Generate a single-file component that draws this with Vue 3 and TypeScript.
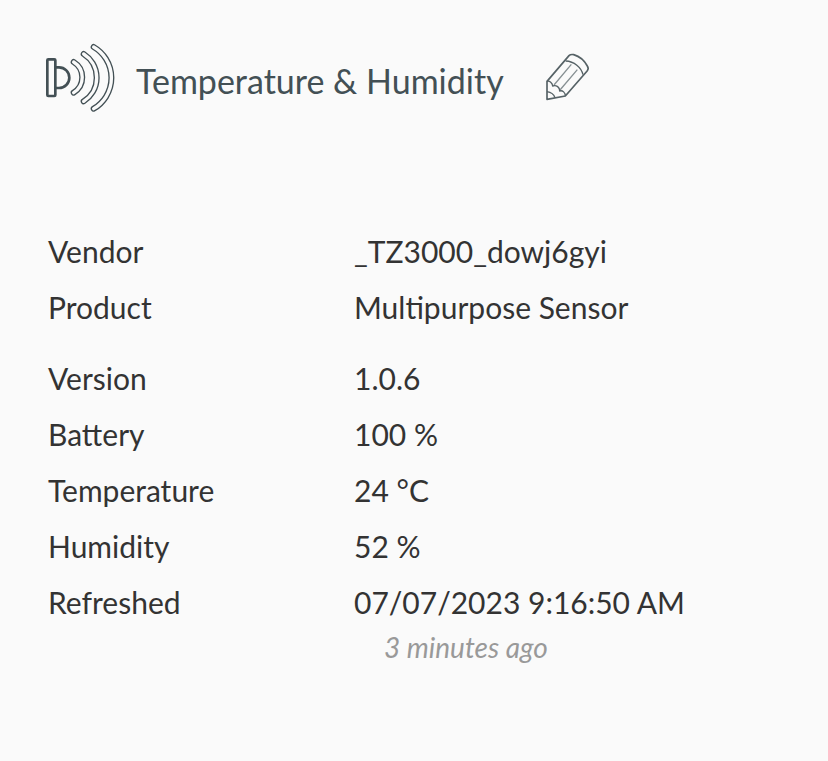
<script setup lang="ts">
interface Detail {
  label: string
  value: string
  note?: string
}

const title = 'Temperature & Humidity'

const groups: Detail[][] = [
  [
    { label: 'Vendor', value: '_TZ3000_dowj6gyi' },
    { label: 'Product', value: 'Multipurpose Sensor' },
  ],
  [
    { label: 'Version', value: '1.0.6' },
    { label: 'Battery', value: '100 %' },
    { label: 'Temperature', value: '24 °C' },
    { label: 'Humidity', value: '52 %' },
    { label: 'Refreshed', value: '07/07/2023 9:16:50 AM', note: '3 minutes ago' },
  ],
]

const waves: string[] = [
  'M113 84A54 54 0 0 1 113 176',
  'M143 60A84 84 0 0 1 143 202',
  'M173 39A107 107 0 0 1 173 224',
]
</script>

<template>
  <main class="device">
    <header class="heading">
      <svg class="sensor" viewBox="27 27 210 210" aria-hidden="true">
        <rect class="body" x="34" y="76" width="24" height="110" rx="3" />
        <path class="body" d="M59 100H69A31 31 0 0 1 69 162H59" />
        <g v-for="wave in waves" :key="wave">
          <path class="wave-edge" :d="wave" />
          <path class="wave-fill" :d="wave" />
        </g>
      </svg>
      <h1>{{ title }}</h1>
      <button class="edit" type="button" aria-label="Edit">
        <svg class="pencil" viewBox="45 42 135 147" aria-hidden="true">
          <path class="outline" d="M51 178V124L117 47Q122 42 131 44Q158 52 172 78Q177 86 172 92L106 168Z" />
          <path class="detail" d="M51 124C59 122 67 128 68 138C79 134 90 142 89 153C98 150 106 158 106 168" />
          <path class="detail" d="M107 63C132 64 154 82 159 104" />
          <path class="detail light" d="M124 73L72 135M142 89L90 150" />
          <path class="detail" d="M51 155Q70 158 75 173" />
        </svg>
      </button>
    </header>

    <dl v-for="(group, index) in groups" :key="index" class="group">
      <div v-for="item in group" :key="item.label" class="row">
        <dt>{{ item.label }}</dt>
        <dd>
          {{ item.value }}
          <em v-if="item.note" class="note">{{ item.note }}</em>
        </dd>
      </div>
    </dl>
  </main>
</template>

<style>
body {
  background: #fafafa;
}
</style>

<style scoped>
.device {
  padding: 43px 48px;
  color: #333;
  font-family: Lato, Carlito, sans-serif;
  font-size: 30px;
  line-height: 40px;
}

.heading {
  display: flex;
  align-items: center;
  margin: 0 0 118px -3px;
  color: #435055;
}

.heading h1 {
  margin: 6px 41px 0 21px;
  font-size: 34px;
  font-weight: 400;
  line-height: 44px;
}

.sensor {
  flex: none;
  width: 70px;
  height: 70px;
  fill: none;
}

.body {
  stroke: currentColor;
  stroke-width: 8;
}

.wave-edge,
.wave-fill {
  stroke-linecap: round;
}

.wave-edge {
  stroke: currentColor;
  stroke-width: 18;
}

.wave-fill {
  stroke: #fafafa;
  stroke-width: 10;
}

.edit {
  display: flex;
  padding: 0;
  border: 0;
  background: none;
  color: #566266;
  cursor: pointer;
}

.pencil {
  width: 45px;
  height: 49px;
  overflow: visible;
  fill: none;
  stroke: currentColor;
  stroke-linejoin: round;
}

.outline {
  stroke-width: 5;
}

.detail {
  stroke-width: 4;
}

.light {
  opacity: 0.7;
}

.group {
  display: grid;
  gap: 16px;
  margin: 0 0 31px;
}

.row {
  display: grid;
  grid-template-columns: 306px 1fr;
}

.row dd {
  margin: 0;
}

.note {
  display: block;
  margin: 5px 0 0 30px;
  color: #999;
  font-size: 28px;
}
</style>
